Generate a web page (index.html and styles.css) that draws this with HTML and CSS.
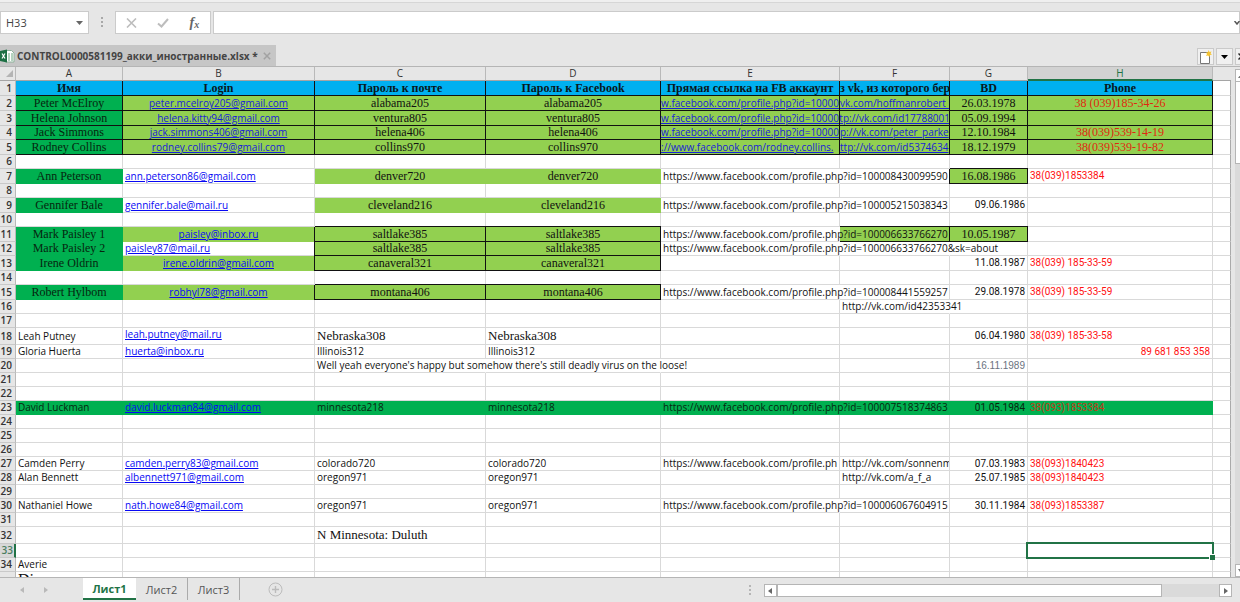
FILE: index.html
```html
<!DOCTYPE html>
<html lang="ru">
<head>
<meta charset="utf-8">
<title>CONTROL0000581199_акки_иностранные.xlsx</title>
<link rel="stylesheet" href="styles.css">
</head>
<body>
<div class="app">
  <header class="formula-bar">
    <div class="name-box">
      <input type="text" value="H33" aria-label="Name box">
      <button type="button" aria-label="Show names"><svg width="7" height="4" viewBox="0 0 7 4"><path d="M0 0h7L3.500 4z" fill="#666"/></svg></button>
    </div>
    <svg class="grip" width="3" height="11" viewBox="0 0 3 11"><path d="M0 0h2v2H0zM0 4h2v2H0zM0 8h2v2H0z" fill="#a8a8a8"/></svg>
    <div class="fx-buttons">
      <button type="button" aria-label="Cancel"><svg width="11" height="10" viewBox="0 0 11 10"><path d="M1 .5l9 9M10 .5l-9 9" stroke="#bdbdbd" stroke-width="1.600" fill="none"/></svg></button>
      <button type="button" aria-label="Enter"><svg width="12" height="10" viewBox="0 0 12 10"><path d="M1 5.500l3.500 3L11 1" stroke="#bdbdbd" stroke-width="2" fill="none"/></svg></button>
      <button type="button" class="fx" aria-label="Insert function">f<span>x</span></button>
    </div>
    <input class="formula" type="text" aria-label="Formula">
    <svg class="expand" width="6" height="4" viewBox="0 0 6 4"><path d="M.5 0L3 3 5.500 0" stroke="#555" stroke-width="1.500" fill="none"/></svg>
  </header>

  <nav class="file-bar">
    <div class="file-tab">
      <svg width="15" height="14" viewBox="0 0 15 14"><path d="M5.500 1.500h6l2.500 2.500v9H5.500z" fill="#fff" stroke="#8fb39c"/><path d="M8 5h5M8 7h5M8 9h5M8 11h5" stroke="#69a77f" stroke-dasharray="2 1"/><path d="M0 2l7-1.500v13L0 12z" fill="#1d7044"/><path d="M2 4.500l3 5M5 4.500l-3 5" stroke="#fff" stroke-width="1.200"/></svg>
      <span>CONTROL0000581199_акки_иностранные.xlsx *</span>
      <button type="button" aria-label="Close"><svg width="8" height="8" viewBox="0 0 8 8"><path d="M.8.8l6.400 6.400M7.200.8L.8 7.200" stroke="#a2a2a2" stroke-width="1.500"/></svg></button>
    </div>
    <div class="file-tools">
      <button type="button" aria-label="New document"><svg width="13" height="14" viewBox="0 0 13 14"><path d="M1.500 2.500h9v11h-9z" fill="#fff" stroke="#777"/><path d="M9.500 0l1 2 2-.5-1 2 1.500 1-2 .5-.5 2-1.500-1.500-2 .5 1-2L7 2.500l2-.3z" fill="#f6c431"/></svg></button>
      <button type="button" aria-label="Document list"><svg width="7" height="4" viewBox="0 0 7 4"><path d="M0 0h7L3.500 4z" fill="#000"/></svg></button>
      <button type="button" class="cut" aria-label="Close document"><svg width="7" height="7" viewBox="0 0 7 7"><path d="M.5.5l6 6M6.500.5l-6 6" stroke="#222" stroke-width="1.500"/></svg></button>
    </div>
  </nav>

  <main class="workspace">
    <div class="sheet">
      <table>
        <colgroup><col class="w-n"><col class="w-a"><col class="w-b"><col class="w-c"><col class="w-d"><col class="w-e"><col class="w-f"><col class="w-g"><col class="w-h"><col></colgroup>
        <thead>
          <tr><th class="corner"><svg width="7" height="7" viewBox="0 0 7 7"><path d="M7 0v7H0z" fill="#b4b4b4"/></svg></th><th>A</th><th>B</th><th>C</th><th>D</th><th>E</th><th>F</th><th>G</th><th class="on">H</th><th class="last"></th></tr>
        </thead>
        <tbody>
          <tr class="t title"><th>1</th><td>Имя</td><td>Login</td><td>Пароль к почте</td><td>Пароль к Facebook</td><td>Прямая ссылка на FB аккаунт</td><td class="cut">з vk, из которого бер</td><td>BD</td><td>Phone</td><td></td></tr>
          <tr class="t boxed"><th>2</th><td class="g">Peter McElroy</td><td><a href="#">peter.mcelroy205@gmail.com</a></td><td>alabama205</td><td>alabama205</td><td class="cut"><a href="#">w.facebook.com/profile.php?id=10000</a></td><td class="cut"><a href="#">vk.com/hoffmanrobert_</a></td><td>26.03.1978</td><td class="red">38 (039)185-34-26</td><td></td></tr>
          <tr class="t boxed"><th>3</th><td class="g">Helena Johnson</td><td><a href="#">helena.kitty94@gmail.com</a></td><td>ventura805</td><td>ventura805</td><td class="cut"><a href="#">w.facebook.com/profile.php?id=10000</a></td><td class="cut end"><a href="#">ttp://vk.com/id17788001</a></td><td>05.09.1994</td><td></td><td></td></tr>
          <tr class="boxed"><th>4</th><td class="g">Jack Simmons</td><td><a href="#">jack.simmons406@gmail.com</a></td><td>helena406</td><td>helena406</td><td class="cut"><a href="#">w.facebook.com/profile.php?id=10000</a></td><td class="cut"><a href="#">p://vk.com/peter_parke</a></td><td>12.10.1984</td><td class="red">38(039)539-14-19</td><td></td></tr>
          <tr class="t boxed"><th>5</th><td class="g">Rodney Collins</td><td><a href="#">rodney.collins79@gmail.com</a></td><td>collins970</td><td>collins970</td><td class="cut"><a href="#">://www.facebook.com/rodney.collins.</a></td><td class="cut"><a href="#">ttp://vk.com/id5374634</a></td><td>18.12.1979</td><td class="red">38(039)539-19-82</td><td></td></tr>
          <tr><th>6</th><td></td><td></td><td></td><td></td><td></td><td></td><td></td><td></td><td></td></tr>
          <tr class="t"><th>7</th><td class="s g">Ann Peterson</td><td><a href="#">ann.peterson86@gmail.com</a></td><td class="s l">denver720</td><td class="s l">denver720</td><td class="over">https://www.facebook.com/profile.php?id=100008430099590</td><td></td><td class="s l bx">16.08.1986</td><td class="red">38(039)1853384</td><td></td></tr>
          <tr><th>8</th><td></td><td></td><td></td><td></td><td></td><td></td><td></td><td></td><td></td></tr>
          <tr class="t"><th>9</th><td class="s g">Gennifer Bale</td><td><a href="#">gennifer.bale@mail.ru</a></td><td class="s l">cleveland216</td><td class="s l">cleveland216</td><td class="over">https://www.facebook.com/profile.php?id=100005215038343</td><td></td><td class="r">09.06.1986</td><td></td><td></td></tr>
          <tr><th>10</th><td></td><td></td><td></td><td></td><td></td><td></td><td></td><td></td><td></td></tr>
          <tr class="t"><th>11</th><td class="s g">Mark Paisley 1</td><td class="l c"><a href="#">paisley@inbox.ru</a></td><td class="s l bx">saltlake385</td><td class="s l bx">saltlake385</td><td class="over">https://www.facebook.com/profile.php?id=100006633766270</td><td class="l bx flat"></td><td class="s l bx">10.05.1987</td><td></td><td></td></tr>
          <tr><th>12</th><td class="s g">Mark Paisley 2</td><td><a href="#">paisley87@mail.ru</a></td><td class="s l bx">saltlake385</td><td class="s l bx">saltlake385</td><td class="over">https://www.facebook.com/profile.php?id=100006633766270&amp;sk=about</td><td class="over"></td><td></td><td></td><td></td></tr>
          <tr class="t"><th>13</th><td class="s g">Irene Oldrin</td><td class="l c"><a href="#">irene.oldrin@gmail.com</a></td><td class="s l bx">canaveral321</td><td class="s l bx">canaveral321</td><td></td><td></td><td class="r">11.08.1987</td><td class="red">38(039) 185-33-59</td><td></td></tr>
          <tr><th>14</th><td></td><td></td><td></td><td></td><td></td><td></td><td></td><td></td><td></td></tr>
          <tr class="t"><th>15</th><td class="s g">Robert Hylbom</td><td class="l c"><a href="#">robhyl78@gmail.com</a></td><td class="s l bx">montana406</td><td class="s l bx">montana406</td><td class="over">https://www.facebook.com/profile.php?id=100008441559257</td><td></td><td class="r">29.08.1978</td><td class="red">38(039) 185-33-59</td><td></td></tr>
          <tr><th>16</th><td></td><td></td><td></td><td></td><td></td><td class="over">http://vk.com/id42353341</td><td></td><td></td><td></td></tr>
          <tr><th>17</th><td></td><td></td><td></td><td></td><td></td><td></td><td></td><td></td><td></td></tr>
          <tr class="x"><th>18</th><td>Leah Putney</td><td class="top"><a href="#">leah.putney@mail.ru</a></td><td class="big">Nebraska308</td><td class="big">Nebraska308</td><td></td><td></td><td class="r">06.04.1980</td><td class="red">38(039) 185-33-58</td><td></td></tr>
          <tr><th>19</th><td>Gloria Huerta</td><td><a href="#">huerta@inbox.ru</a></td><td>Illinois312</td><td>Illinois312</td><td></td><td></td><td></td><td class="red r">89 681 853 358</td><td></td></tr>
          <tr><th>20</th><td></td><td></td><td class="over">Well yeah everyone's happy but somehow there's still deadly virus on the loose!</td><td class="over"></td><td></td><td></td><td class="r gray">16.11.1989</td><td></td><td></td></tr>
          <tr><th>21</th><td></td><td></td><td></td><td></td><td></td><td></td><td></td><td></td><td></td></tr>
          <tr><th>22</th><td></td><td></td><td></td><td></td><td></td><td></td><td></td><td></td><td></td></tr>
          <tr><th>23</th><td class="g">David Luckman</td><td class="g"><a href="#">david.luckman84@gmail.com</a></td><td class="g">minnesota218</td><td class="g">minnesota218</td><td class="g">https://www.facebook.com/profile.php?id=100007518374863</td><td class="g"></td><td class="g r">01.05.1984</td><td class="g red">38(093)1853384</td><td></td></tr>
          <tr><th>24</th><td></td><td></td><td></td><td></td><td></td><td></td><td></td><td></td><td></td></tr>
          <tr><th>25</th><td></td><td></td><td></td><td></td><td></td><td></td><td></td><td></td><td></td></tr>
          <tr><th>26</th><td></td><td></td><td></td><td></td><td></td><td></td><td></td><td></td><td></td></tr>
          <tr><th>27</th><td>Camden Perry</td><td><a href="#">camden.perry83@gmail.com</a></td><td>colorado720</td><td>colorado720</td><td class="clip">https://www.facebook.com/profile.ph</td><td class="clip">http://vk.com/sonnenm</td><td class="r">07.03.1983</td><td class="red">38(093)1840423</td><td></td></tr>
          <tr><th>28</th><td>Alan Bennett</td><td><a href="#">albennett971@gmail.com</a></td><td>oregon971</td><td>oregon971</td><td></td><td>http://vk.com/a_f_a</td><td class="r">25.07.1985</td><td class="red">38(093)1840423</td><td></td></tr>
          <tr><th>29</th><td></td><td></td><td></td><td></td><td></td><td></td><td></td><td></td><td></td></tr>
          <tr><th>30</th><td>Nathaniel Howe</td><td><a href="#">nath.howe84@gmail.com</a></td><td>oregon971</td><td>oregon971</td><td class="over">https://www.facebook.com/profile.php?id=100006067604915</td><td></td><td class="r">30.11.1984</td><td class="red">38(093)1853387</td><td></td></tr>
          <tr><th>31</th><td></td><td></td><td></td><td></td><td></td><td></td><td></td><td></td><td></td></tr>
          <tr class="x"><th>32</th><td></td><td></td><td class="big">N Minnesota: Duluth</td><td></td><td></td><td></td><td></td><td></td><td></td></tr>
          <tr><th class="on">33</th><td></td><td></td><td></td><td></td><td></td><td></td><td></td><td class="selected"></td><td></td></tr>
          <tr><th>34</th><td>Averie</td><td></td><td></td><td></td><td></td><td></td><td></td><td></td><td></td></tr>
          <tr class="x"><th></th><td class="big name">Di</td><td></td><td></td><td></td><td></td><td></td><td></td><td></td><td></td></tr>
        </tbody>
      </table>
    </div>
    <div class="vscroll">
      <button type="button" aria-label="Scroll up"><svg width="6" height="4" viewBox="0 0 6 4"><path d="M3 0l3 4H0z" fill="#777"/></svg></button>
      <div class="vtrack"><div class="vthumb"></div></div>
      <button type="button" aria-label="Scroll down"><svg width="6" height="4" viewBox="0 0 6 4"><path d="M3 4l3-4H0z" fill="#777"/></svg></button>
    </div>
  </main>

  <footer class="tab-bar">
    <div class="arrows">
      <button type="button" aria-label="Previous sheet"><svg width="4" height="6" viewBox="0 0 4 6"><path d="M4 0v6L0 3z" fill="#b9b9b9"/></svg></button>
      <button type="button" aria-label="Next sheet"><svg width="4" height="6" viewBox="0 0 4 6"><path d="M0 0v6l4-3z" fill="#b9b9b9"/></svg></button>
    </div>
    <div class="tabs">
      <button type="button" class="current">Лист1</button>
      <button type="button">Лист2</button>
      <button type="button">Лист3</button>
      <button type="button" class="add" aria-label="Add sheet"><svg width="15" height="15" viewBox="0 0 15 15"><circle cx="7.500" cy="7.500" r="6.500" fill="none" stroke="#bcbcbc"/><path d="M7.500 4v7M4 7.500h7" stroke="#bcbcbc" stroke-width="1.400"/></svg></button>
    </div>
    <svg class="grip" width="3" height="11" viewBox="0 0 3 11"><path d="M0 0h2v2H0zM0 4h2v2H0zM0 8h2v2H0z" fill="#b5b5b5"/></svg>
    <div class="hscroll">
      <button type="button" aria-label="Scroll left"><svg width="4" height="6" viewBox="0 0 4 6"><path d="M4 0v6L0 3z" fill="#666"/></svg></button>
      <div class="htrack"><div class="hthumb"></div></div>
      <button type="button" aria-label="Scroll right"><svg width="4" height="6" viewBox="0 0 4 6"><path d="M0 0v6l4-3z" fill="#666"/></svg></button>
    </div>
  </footer>
</div>
</body>
</html>
```
FILE: styles.css
```css
* { box-sizing: border-box; }
body { margin: 0; font-family: "Open Sans", "Noto Sans", sans-serif; font-size: 10px; color: #111; }
button { margin: 0; padding: 0; border: 0; background: none; font: inherit; color: inherit; display: flex; align-items: center; justify-content: center; }
input { font: inherit; color: inherit; margin: 0; }
svg { display: block; flex: none; }

.app { display: flex; flex-direction: column; height: 100vh; overflow: hidden; background: #e6e6e6; }

.formula-bar { display: flex; align-items: center; height: 45px; flex: none; border-top: 2px solid #efefef; box-shadow: inset 0 1px 0 #d6d6d6; padding-bottom: 2px; }
.name-box { display: flex; width: 89px; height: 23px; background: #fff; border: 1px solid #cbcbcb; }
.name-box input { flex: 1; min-width: 0; border: 0; padding: 0 0 0 5px; background: none; font-size: 11px; color: #444; }
.name-box button { width: 18px; }
.formula-bar .grip { margin: 0 11px 0 12px; }
.fx-buttons { display: flex; width: 96px; height: 23px; background: #fff; border: 1px solid #cbcbcb; margin-right: 2px; }
.fx-buttons button { flex: 1; }
.fx-buttons .fx { font: italic bold 14px "Liberation Serif", serif; color: #666; }
.fx span { font-size: 10px; padding-top: 4px; }
.formula { flex: 1; min-width: 0; height: 23px; border: 1px solid #cbcbcb; background: #fff; }
.expand { margin-left: -6px; }

.file-bar { display: flex; justify-content: space-between; height: 22px; flex: none; border-bottom: 1px solid #b5b5b5; }
.file-tab { display: flex; align-items: center; background: #c6c6c6; width: 276px; font-weight: 700; font-size: 10px; color: #444; white-space: nowrap; }
.file-tab span { flex: 1; padding-left: 2px; }
.file-tab button { width: 18px; }
.file-tools { display: flex; gap: 2px; padding-top: 3px; overflow: hidden; }
.file-tools button { width: 17px; height: 17px; border: 1px solid #cacaca; background: #f0f0f0; }
.file-tools .cut { width: 5px; overflow: hidden; border-right: 0; justify-content: flex-start; padding-left: 2px; }

.workspace { display: flex; flex: 1; min-height: 0; }
.sheet { flex: 1; min-width: 0; overflow: hidden; }
table { width: 100%; table-layout: fixed; border-collapse: separate; border-spacing: 0; }
.w-n { width: 16px; }
.w-a { width: 107px; }
.w-b { width: 192px; }
.w-c { width: 171px; }
.w-d { width: 175px; }
.w-e { width: 179px; }
.w-f { width: 110px; }
.w-g { width: 78px; }
.w-h { width: 185px; }

th { padding: 0; height: 14px; font-weight: 400; line-height: 13px; background: #e6e6e6; border-right: 1px solid #b9b9b9; border-bottom: 1px solid #c9c9c9; color: #333; white-space: nowrap; }
tbody th { text-align: right; padding-right: 4px; font-weight: 600; direction: rtl; }
thead th { border-bottom-color: #a5a5a5; }
thead .last { border-right: 0; }
thead .on { background: #d2d2d2; color: #217346; border-bottom: 2px solid #217346; line-height: 12px; }
tbody .on { background: #d8d8d8; color: #4a7d5f; border-right: 2px solid #217346; padding-right: 3px; }
.corner svg { margin-left: 6px; }

td { height: 14px; padding: 0 2px; line-height: 13px; background: #fff; border-right: 1px solid #d9d9d9; border-bottom: 1px solid #d9d9d9; white-space: nowrap; }
td:last-child { border-right-color: #aaa; }
.t td, .t th { height: 15px; line-height: 14px; }
.x td, .x th { height: 17px; line-height: 16px; }
.x .top { vertical-align: top; line-height: 13px; }
.big { font: 13px/16px "Liberation Serif", serif; }
.x .big { line-height: 16px; }
.x .name { font-size: 16px; }
td.over { border-right-color: #fff; }
td.clip { overflow: hidden; text-overflow: clip; }
td.r { text-align: right; }
td.red { color: #f11; }
td.r, td.red { font-family: Roboto, "Open Sans", sans-serif; }
td.gray { font-family: "Liberation Sans", sans-serif; color: #6b7280; }
td.s, .title td, .boxed td { font-family: "Liberation Serif", serif; font-size: 12px; text-align: center; }
td.c { text-align: center; }
td a { font-family: "Open Sans", "Noto Sans", sans-serif; font-size: 10px; color: #0808f4; }
.title td:not(:last-child) { background: #00b0f0; border-color: #111; font-weight: 700; color: #081820; }
.boxed td:not(:last-child) { background: #92d050; border-color: #111; }
.boxed a { color: #1820d8; }
.boxed td.red { color: #e02810; font-family: "Liberation Serif", serif; }
.title td.cut, .boxed td.cut { padding: 0; text-align: left; overflow: hidden; text-overflow: clip; }
.boxed td.end { direction: rtl; }
.end a { unicode-bidi: isolate; direction: ltr; }
td.l { background: #92d050; border-color: #92d050; }
td.g, .boxed td.g:not(:last-child) { background: #00b050; }
td.g { border-color: #00b050; color: #06260f; }
td.g.red { color: #c03a18; }
td.bx { border-color: #111; box-shadow: 0 -1px 0 #111, -1px 0 0 #111; }
td.flat { box-shadow: 0 -1px 0 #111; }
.selected { position: relative; }
.selected::before { content: ""; position: absolute; inset: -2px -2px -2px -2px; border: 2px solid #217346; }
.selected::after { content: ""; position: absolute; right: -3px; bottom: -3px; width: 5px; height: 5px; background: #217346; border: 1px solid #fff; border-width: 1px 0 0 1px; }

.vscroll { display: flex; flex-direction: column; width: 5px; margin: 2px 0 0 4px; flex: none; }
.vscroll button { height: 13px; background: #fff; border: 1px solid #b5b5b5; border-right: 0; overflow: hidden; justify-content: flex-start; padding-left: 2px; }
.vtrack { flex: 1; background: #dadada; }
.vthumb { height: 17%; background: #fff; border-left: 1px solid #b5b5b5; border-bottom: 1px solid #b5b5b5; }

.tab-bar { display: flex; align-items: flex-start; height: 25px; flex: none; border-top: 1px solid #b5b5b5; padding-right: 8px; }
.arrows { display: flex; width: 83px; height: 24px; gap: 20px; padding-left: 20px; align-items: center; }
.tabs { display: flex; flex: 1; font-size: 11px; color: #555; }
.tabs button { height: 22px; width: 52px; border-right: 1px solid #ababab; }
.tabs .current { width: 53px; background: #fff; border-right: 0; border-bottom: 2px solid #217346; color: #217346; font-weight: 700; }
.tabs .add { width: 70px; border-right: 0; }
.tab-bar .grip { margin: 7px 12px 0 0; }
.hscroll { display: flex; width: 38%; height: 13px; margin-top: 6px; }
.hscroll button { width: 13px; background: #fff; border: 1px solid #b5b5b5; }
.htrack { flex: 1; background: #dadada; }
.hthumb { width: 87%; height: 13px; background: #fff; border: 1px solid #b5b5b5; }
```
